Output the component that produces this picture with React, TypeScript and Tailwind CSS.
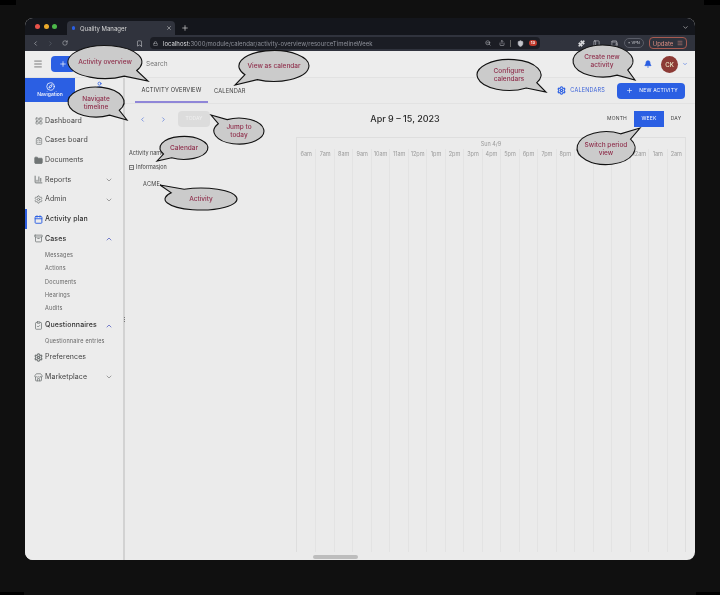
import React from "react";
import {
  Menu, Plus, Compass, User, LayoutGrid, ClipboardList, Folder, BarChart3, Settings, Calendar, ChevronDown, ChevronUp,
  ChevronLeft, ChevronRight, Archive, ClipboardCheck, Store, Bell, RotateCw, Bookmark, ZoomOut, Share, Shield, Puzzle,
  PanelLeft, Wallet, X, Lock,
} from "lucide-react";

const balloons = [
  { c: [105, 62], r: [37, 16.5], t: [148, 81] },
  { c: [274, 66], r: [35, 15.5], t: [235, 85] },
  { c: [96, 102], r: [28, 15], t: [127, 120] },
  { c: [239, 131], r: [25, 13], t: [211, 115] },
  { c: [184, 148], r: [24, 11.5], t: [157, 161] },
  { c: [201, 199], r: [36, 11], t: [160, 185] },
  { c: [509, 75], r: [32, 15.5], t: [546, 92] },
  { c: [603, 61], r: [30, 16], t: [635, 80] },
  { c: [606, 148], r: [29, 16.5], t: [640, 128] },
];

function balloonPath(b: { c: number[]; r: number[]; t: number[] }) {
  const [cx, cy] = b.c;
  const [rx, ry] = b.r;
  const a = Math.atan2((b.t[1] - cy) / ry, (b.t[0] - cx) / rx);
  const s = a + 0.24;
  const e = a - 0.24;
  const p = (v: number) => `${(cx + rx * Math.cos(v)).toFixed(1)} ${(cy + ry * Math.sin(v)).toFixed(1)}`;
  return `M${p(s)} A${rx} ${ry} 0 1 1 ${p(e)} L${b.t[0]} ${b.t[1]} Z`;
}

const hours = ["6am", "7am", "8am", "9am", "10am", "11am", "12pm", "1pm", "2pm", "3pm", "4pm", "5pm", "6pm", "7pm", "8pm", "9pm", "10pm", "11pm", "12am", "1am", "2am"];

type ItemProps = { icon?: React.ReactNode; label: string; chevron?: "up" | "down"; active?: boolean; strong?: boolean };

function NavItem({ icon, label, chevron, active, strong }: ItemProps) {
  return (
    <div className="relative flex h-[19.7px] items-center pl-[7px] pr-[10px]">
      {active && <div className="absolute left-0 top-0 h-full w-[2px] bg-[#2f5fe0]" />}
      <div className="flex w-[13px] justify-center text-[#6f7474]">{icon}</div>
      <span className={`flex-1 text-[7px] tracking-[0.1px] ${strong ? "font-medium text-[#333]" : "font-normal text-[#444]"}`}>{label}</span>
      {chevron === "down" && <ChevronDown size={8} className="text-[#777]" />}
      {chevron === "up" && <ChevronUp size={8} className="text-[#3b47b8]" />}
    </div>
  );
}

function SubItem({ label }: { label: string }) {
  return <div className="flex h-[13.2px] items-center pl-[20px] text-[5.5px] tracking-[0.2px] text-[#666]">{label}</div>;
}

function Sidebar() {
  return (
    <aside className="flex w-[100px] shrink-0 flex-col border-r-2 border-[#d2d2d2] bg-[#ececec]">
      <div className="flex h-[24px] shrink-0">
        <div className="flex w-[50px] flex-col items-center justify-center bg-[#2b5fe3] text-white">
          <Compass size={9} />
          <span className="text-[5px] font-medium leading-[7px]">Navigation</span>
        </div>
        <div className="flex flex-1 justify-center pt-[3px] text-[#2b5fe3]">
          <User size={9} />
        </div>
      </div>
      <div className="pt-[9px]">
        <NavItem icon={<LayoutGrid size={8} />} label="Dashboard" />
        <NavItem icon={<ClipboardList size={8} />} label="Cases board" />
        <NavItem icon={<Folder size={9} fill="#6f7474" />} label="Documents" />
        <NavItem icon={<BarChart3 size={9} strokeWidth={2.5} />} label="Reports" chevron="down" />
        <NavItem icon={<Settings size={9} />} label="Admin" chevron="down" />
        <NavItem icon={<Calendar size={9} strokeWidth={2.5} className="text-[#2b5fe3]" />} label="Activity plan" active strong />
        <NavItem icon={<Archive size={9} />} label="Cases" chevron="up" strong />
        <div className="pb-[1px]">
          <SubItem label="Messages" />
          <SubItem label="Actions" />
          <SubItem label="Documents" />
          <SubItem label="Hearings" />
          <SubItem label="Audits" />
        </div>
        <NavItem icon={<ClipboardCheck size={9} />} label="Questionnaires" chevron="up" strong />
        <div className="-mt-[1px]">
          <SubItem label="Questionnaire entries" />
        </div>
        <NavItem icon={<Settings size={9} strokeWidth={3} />} label="Preferences" />
        <NavItem icon={<Store size={9} />} label="Marketplace" chevron="down" />
      </div>
    </aside>
  );
}

function TimeGrid() {
  return (
    <div className="flex flex-1 min-h-0 pr-[9px]">
      <div className="w-[171px] shrink-0 pl-[4px] pt-[12px] text-[5.5px] text-[#444]">
        <div className="h-[12px] leading-[8px]">Activity name</div>
        <div className="flex h-[13px] items-center gap-[2px]">
          <span className="flex h-[5px] w-[5px] items-center justify-center border border-[#777] text-[5px] leading-none">−</span>
          <span>Informasjon</span>
        </div>
        <div className="pl-[14px] pt-[6px] tracking-[0.3px]">ACME</div>
      </div>
      <div className="flex min-w-0 flex-1 flex-col border-x border-t border-[#dedede]">
        <div className="h-[11px] pt-[2px] text-center text-[5.5px] leading-[8px] text-[#999]">Sun 4/9</div>
        <div className="grid flex-1 grid-cols-[repeat(21,1fr)]">
          {hours.map((h, i) => (
            <div key={h} className={`pt-[1px] text-center text-[5.5px] leading-[8px] text-[#999] ${i ? "border-l border-[#e3e3e3]" : ""}`}>
              {h}
            </div>
          ))}
        </div>
      </div>
    </div>
  );
}

export default function App() {
  return (
    <div className="relative h-[595px] w-[720px] overflow-hidden bg-[#101010] pl-[25px] pt-[18px] font-['Inter',sans-serif] blur-[0.35px]">
      <div className="flex h-[542px] w-[670px] flex-col overflow-hidden rounded-lg bg-[#ebebeb]">
        {/* browser tabs */}
        <div className="flex h-[17px] shrink-0 items-end bg-[#14161c] pl-[10px] text-[#d8d8d8]">
          <div className="mb-[6px] flex gap-[3.5px]">
            <span className="h-[5px] w-[5px] rounded-full bg-[#e8524a]" />
            <span className="h-[5px] w-[5px] rounded-full bg-[#eaa92b]" />
            <span className="h-[5px] w-[5px] rounded-full bg-[#4cb84a]" />
          </div>
          <div className="ml-[10px] flex h-[14px] w-[108px] items-center rounded-t bg-[#30333d] pl-[5px] pr-[3px] text-[6px]">
            <span className="mr-[5px] h-[4px] w-[3px] rounded-sm bg-[#2b5fe3]" />
            <span className="flex-1">Quality Manager</span>
            <X size={6} />
          </div>
          <Plus size={8} className="mb-[3px] ml-[6px]" />
          <ChevronDown size={7} className="mb-[4px] ml-auto mr-[6px]" />
        </div>
        {/* browser toolbar */}
        <div className="flex h-[16px] shrink-0 items-center bg-[#30333d] pl-[7px] text-[#c4c6cc]">
          <ChevronLeft size={7} />
          <ChevronRight size={7} className="ml-[8px] text-[#666a75]" />
          <RotateCw size={6} className="ml-[8px]" />
          <Bookmark size={7} className="ml-[68px]" />
          <div className="ml-[7px] flex h-[12px] w-[390px] items-center rounded-sm bg-[#1b1d24] pl-[3px] pr-[2px] text-[6px]">
            <Lock size={5} />
            <span className="ml-[5px] flex-1 truncate text-[#8d9099]"><span className="text-[#dcdde0]">localhost:</span>3000/module/calendar/activity-overview/resourceTimelineWeek</span>
            <ZoomOut size={6} />
            <Share size={6} className="ml-[8px]" />
            <span className="ml-[5px] h-[7px] w-px bg-[#666]" />
            <Shield size={7} className="ml-[6px]" fill="#c4c6cc" />
            <span className="ml-[5px] mr-[1px] rounded-sm bg-[#c0392b] px-[2px] text-[4px] font-semibold leading-[6px] text-white">13</span>
          </div>
          <Puzzle size={7} className="ml-[38px]" fill="#dcdde0" />
          <PanelLeft size={7} className="ml-[8px]" />
          <Wallet size={7} className="ml-[11px]" />
          <span className="ml-[6px] rounded-full border border-[#5a5d68] px-[3px] text-[4px] leading-[8px]">• VPN</span>
          <span className="ml-[5px] flex h-[12px] items-center gap-[4px] rounded-sm border border-[#a85a50] px-[3px] text-[6px] text-[#d98c80]">Update<Menu size={6} /></span>
        </div>
        {/* app bar */}
        <div className="flex h-[27px] shrink-0 items-center border-b border-[#e2e2e2] bg-[#ededed] pl-[8px] pr-[7px]">
          <Menu size={10} className="text-[#666]" />
          <div className="ml-[8px] flex h-[16px] w-[24px] items-center justify-center rounded-sm bg-[#2b5fe3] text-white"><Plus size={8} /></div>
          <span className="ml-[71px] flex-1 pt-[2px] text-[6.5px] text-[#777]">Search</span>
          <Bell size={8} fill="#2b5fe3" className="text-[#2b5fe3]" />
          <div className="ml-[9px] flex h-[17px] w-[17px] items-center justify-center rounded-full bg-[#8c3a35] text-[6px] font-medium text-[#eec]">CK</div>
          <ChevronDown size={6} className="ml-[4px] text-[#2b5fe3]" />
        </div>
        <div className="flex min-h-0 flex-1">
          <Sidebar />
          <main className="flex min-w-0 flex-1 flex-col">
            {/* tabs */}
            <div className="flex h-[26px] shrink-0 items-center justify-between border-b border-[#e2e2e2] pl-[10px] pr-[10px]">
              <div className="flex h-full text-[5.7px] tracking-[0.15px] text-[#333]">
                <div className="flex w-[73px] items-center justify-center border-b-2 border-[#8f86d8] pt-[2px]">ACTIVITY OVERVIEW</div>
                <div className="flex items-center pl-[6px] pt-[1px] text-[#444]">CALENDAR</div>
              </div>
              <div className="flex items-center">
                <Settings size={9} strokeWidth={3} className="text-[#2b5fe3]" />
                <span className="ml-[4px] text-[5.5px] tracking-[0.2px] text-[#3b62d8]">CALENDARS</span>
                <div className="ml-[12px] flex h-[16px] w-[68px] items-center justify-center gap-[6px] rounded-sm bg-[#2b5fe3] pl-[2px] text-[5px] tracking-[0.2px] text-white">
                  <Plus size={7} />NEW ACTIVITY
                </div>
              </div>
            </div>
            {/* toolbar */}
            <div className="flex h-[33px] shrink-0 items-center pb-[3px] pl-[10px] pr-[7px]">
              <div className="flex w-[43px] items-center gap-[14px] pl-[4px] text-[#3b62d8]">
                <ChevronLeft size={7} />
                <ChevronRight size={7} />
              </div>
              <div className="flex h-[16px] w-[32px] items-center justify-center rounded-sm bg-[#dcdcdc] text-[5px] text-[#f0f0f0]">TODAY</div>
              <div className="flex-1 text-center text-[9px] font-medium text-[#2b2b2b]">Apr 9 – 15, 2023</div>
              <div className="flex items-center text-[5px] tracking-[0.2px] text-[#444]">
                <span className="w-[34px] text-center">MONTH</span>
                <span className="flex h-[16px] w-[30px] items-center justify-center bg-[#2b5fe3] text-white">WEEK</span>
                <span className="w-[24px] text-center">DAY</span>
              </div>
            </div>
            <TimeGrid />
            <div className="relative h-[8px] shrink-0">
              <div className="absolute left-[188px] top-[3px] h-[4px] w-[45px] rounded-sm bg-[#bdbdbd]" />
            </div>
          </main>
        </div>
      </div>

      {/* speech balloons */}
      <svg className="absolute left-0 top-0" width="720" height="595">
        {balloons.map((b, i) => (
          <path key={i} d={balloonPath(b)} fill="#cbcbcb" stroke="#111" strokeWidth="1.1" />
        ))}
      </svg>
      <div className="pointer-events-none absolute inset-0 text-center text-[6.5px] font-medium leading-[8px] text-[#8f2f4c]">
        <div className="absolute left-[105px] top-[62px] -translate-x-1/2 -translate-y-1/2 whitespace-nowrap">Activity overview</div>
        <div className="absolute left-[274px] top-[66px] -translate-x-1/2 -translate-y-1/2 whitespace-nowrap">View as calendar</div>
        <div className="absolute left-[96px] top-[103px] -translate-x-1/2 -translate-y-1/2">Navigate<br />timeline</div>
        <div className="absolute left-[239px] top-[131px] -translate-x-1/2 -translate-y-1/2">Jump to<br />today</div>
        <div className="absolute left-[184px] top-[148px] -translate-x-1/2 -translate-y-1/2">Calendar</div>
        <div className="absolute left-[201px] top-[199px] -translate-x-1/2 -translate-y-1/2">Activity</div>
        <div className="absolute left-[509px] top-[75px] -translate-x-1/2 -translate-y-1/2">Configure<br />calendars</div>
        <div className="absolute left-[602px] top-[61px] -translate-x-1/2 -translate-y-1/2">Create new<br />activity</div>
        <div className="absolute left-[606px] top-[149px] -translate-x-1/2 -translate-y-1/2 w-[50px]">Switch period view</div>
      </div>
      {/* sidebar resize handle */}
      <div className="absolute left-[123.5px] top-[317px] flex flex-col gap-[1px]">
        <span className="h-[1px] w-[1px] bg-[#777]" />
        <span className="h-[1px] w-[1px] bg-[#777]" />
        <span className="h-[1px] w-[1px] bg-[#777]" />
      </div>
      {/* outer corners of the capture */}
      <div className="absolute left-0 top-0 h-[5px] w-[16px] bg-black" />
      <div className="absolute right-0 top-0 h-[5px] w-[16px] bg-black" />
      <div className="absolute bottom-0 left-0 h-[3px] w-[24px] bg-black" />
      <div className="absolute bottom-0 right-0 h-[3px] w-[24px] bg-black" />
    </div>
  );
}
